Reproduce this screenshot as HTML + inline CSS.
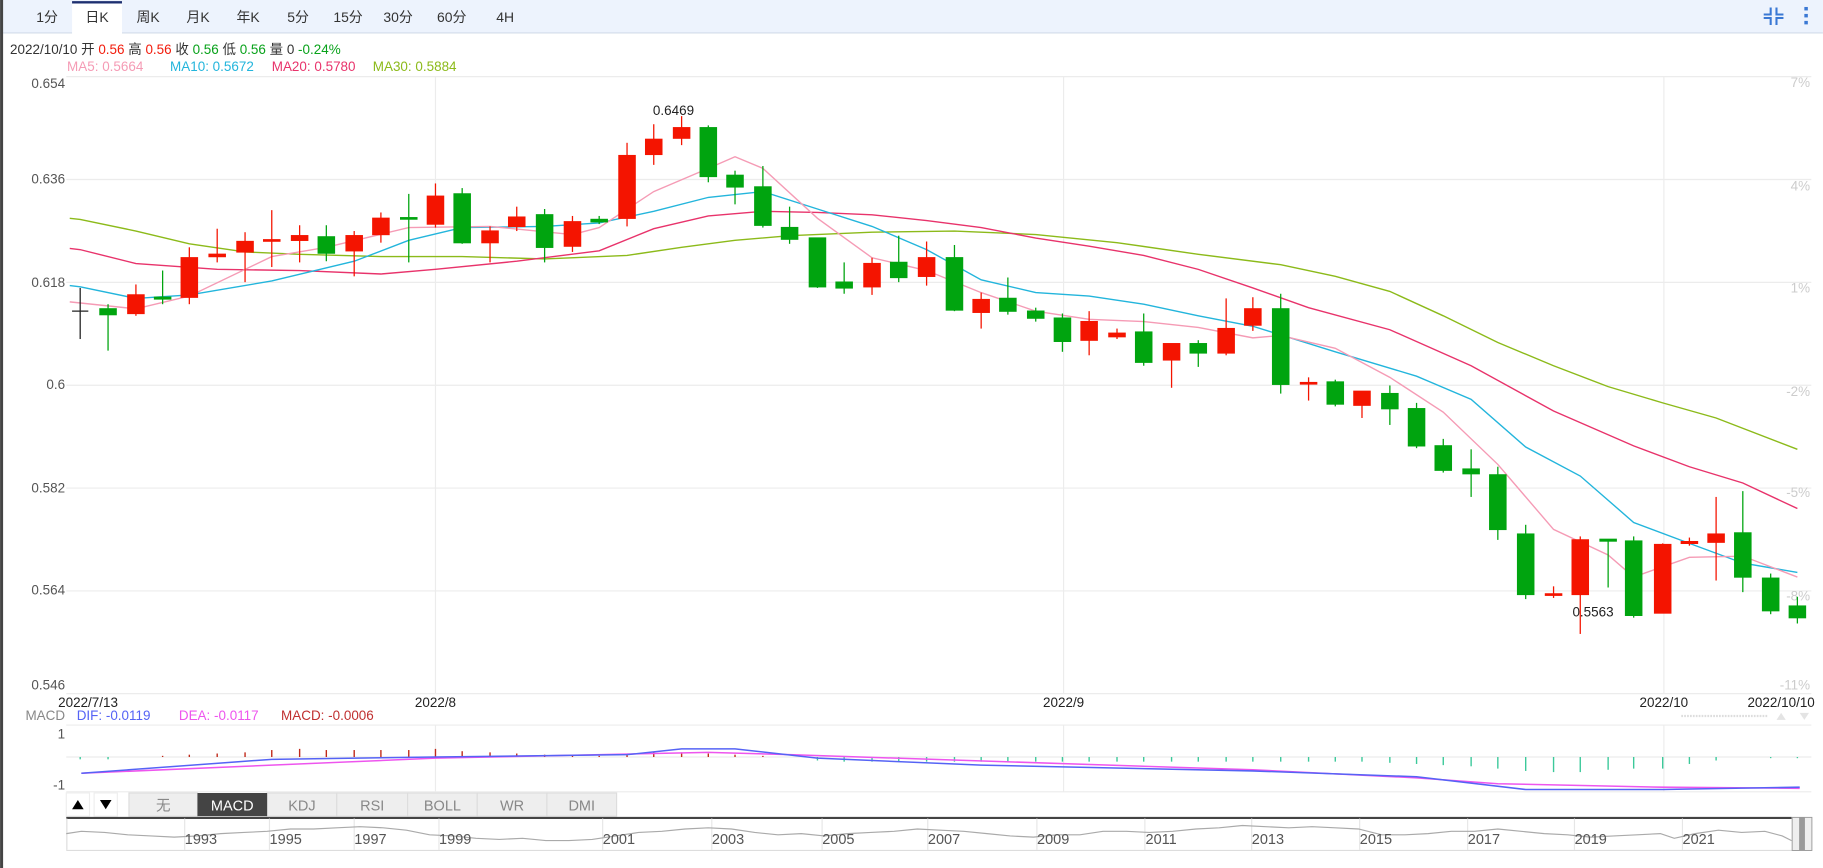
<!DOCTYPE html>
<html><head><meta charset="utf-8"><style>
html,body{margin:0;padding:0;background:#fff;width:1823px;height:868px;overflow:hidden}
svg{display:block}
text{font-family:"Liberation Sans","Noto Sans CJK SC",sans-serif}
.r{fill:#f41400;stroke:#f41400}
.g{fill:#00a40f;stroke:#00a40f}
.w{stroke-width:1.1}
</style></head><body>
<svg width="1823" height="868" viewBox="0 0 1570 747.6" xmlns="http://www.w3.org/2000/svg">
<rect x="0" y="0" width="1570" height="748" fill="#fff"/>
<rect x="0" y="0" width="1570" height="28.4" fill="#edf3fd"/>
<line x1="0" y1="28.4" x2="1570" y2="28.4" stroke="#d3dcea" stroke-width="1"/>
<rect x="62" y="1" width="43" height="28" fill="#fff"/>
<line x1="62" y1="2" x2="105" y2="2" stroke="#1d2f70" stroke-width="2"/>
<g font-size="12" fill="#333" text-anchor="middle">
<text x="40.5" y="19">1分</text><text x="83.5" y="19">日K</text><text x="127.5" y="19">周K</text>
<text x="170.5" y="19">月K</text><text x="213.6" y="19">年K</text><text x="256.7" y="19">5分</text>
<text x="299.7" y="19">15分</text><text x="342.8" y="19">30分</text><text x="389" y="19">60分</text><text x="435" y="19">4H</text>
</g>
<g stroke="#3a78d4" stroke-width="1.8" fill="none">
<path d="M1519 12.5h6v-6M1536 12.5h-6v-6M1519 15.5h6v6M1536 15.5h-6v6"/>
</g>
<g fill="#3a78d4"><rect x="1554" y="6" width="3" height="3"/><rect x="1554" y="12" width="3" height="3"/><rect x="1554" y="18" width="3" height="3"/></g>
<rect x="0" y="0" width="2.6" height="748" fill="#444"/>
<g font-size="11.6">
<text x="8.6" y="46.5" fill="#333">2022/10/10 开 <tspan fill="#f21b0b">0.56</tspan> 高 <tspan fill="#f21b0b">0.56</tspan> 收 <tspan fill="#08a21a">0.56</tspan> 低 <tspan fill="#08a21a">0.56</tspan> 量 0 <tspan fill="#08a21a">-0.24%</tspan></text>
<text x="57.7" y="61" fill="#f59bb5">MA5: 0.5664</text>
<text x="146.4" y="61" fill="#23b5dc">MA10: 0.5672</text>
<text x="234" y="61" fill="#e8336b">MA20: 0.5780</text>
<text x="321" y="61" fill="#8cba1a">MA30: 0.5884</text>
</g>
<g stroke="#ececec" stroke-width="1">
<line x1="57" y1="66" x2="1560" y2="66"/><line x1="57" y1="154.6" x2="1560" y2="154.6"/>
<line x1="57" y1="243.2" x2="1560" y2="243.2"/><line x1="57" y1="331.8" x2="1560" y2="331.8"/>
<line x1="57" y1="420.4" x2="1560" y2="420.4"/><line x1="57" y1="509" x2="1560" y2="509"/>
<line x1="57" y1="597.4" x2="1560" y2="597.4"/>
<line x1="375" y1="66" x2="375" y2="597"/><line x1="916" y1="66" x2="916" y2="597"/><line x1="1433" y1="66" x2="1433" y2="597"/>
<line x1="57" y1="624.5" x2="1560" y2="624.5"/><line x1="57" y1="652" x2="1560" y2="652"/><line x1="57" y1="682" x2="1560" y2="682"/>
<line x1="375" y1="624.5" x2="375" y2="682"/><line x1="916" y1="624.5" x2="916" y2="682"/><line x1="1433" y1="624.5" x2="1433" y2="682"/>
</g>
<g font-size="11.6" fill="#555" text-anchor="end">
<text x="56" y="76">0.654</text><text x="56" y="158">0.636</text><text x="56" y="247">0.618</text>
<text x="56" y="335">0.6</text><text x="56" y="424">0.582</text><text x="56" y="512">0.564</text><text x="56" y="594">0.546</text>
<text x="56" y="620" fill="#888">MACD</text><text x="56" y="636">1</text><text x="56" y="680">-1</text>
</g>
<g font-size="11.6" fill="#ccc" text-anchor="end">
<text x="1559" y="75">7%</text><text x="1559" y="164">4%</text><text x="1559" y="252">1%</text>
<text x="1559" y="341">-2%</text><text x="1559" y="428">-5%</text><text x="1559" y="517">-8%</text><text x="1559" y="594">-11%</text>
</g>
<g font-size="11.6" fill="#222">
<text x="50" y="609">2022/7/13</text><text x="375" y="609" text-anchor="middle">2022/8</text>
<text x="916" y="609" text-anchor="middle">2022/9</text><text x="1433" y="609" text-anchor="middle">2022/10</text>
<text x="1563" y="609" text-anchor="end">2022/10/10</text>
</g>
<line x1="1448" y1="616.7" x2="1523" y2="616.7" stroke="#ddd" stroke-width="2" stroke-dasharray="1.5 1"/>
<path d="M1530 620l4-6 4 6z M1550 614l4 6 4-6z" fill="#e4e4e4"/>
<g font-size="11.6"><text x="66" y="620" fill="#5563f5">DIF: -0.0119</text><text x="154" y="620" fill="#ee55ee">DEA: -0.0117</text><text x="242" y="620" fill="#c03030">MACD: -0.0006</text></g>
<g fill="none" stroke-width="1.2">
<polyline stroke="#8cba1a" points="60,188 69,189 117,199 163,210 211,217 258,219 328,221 398,221 469,223 540,220 587,213 633,207 680,203 751,200 822,199 892,202 962,209 1032,219 1103,228 1150,238 1197,251 1243,272 1290,295 1338,315 1385,333 1432,347 1478,360 1548,387"/>
<polyline stroke="#e8336b" points="60,214 69,215 117,227 187,232 258,233 328,236 375,232 445,225 516,216 563,197 610,186 657,182 704,183 751,185 798,190 845,196 892,205 938,212 985,220 1032,232 1079,248 1127,265 1197,284 1267,315 1338,354 1407,384 1455,402 1501,416 1548,438"/>
<polyline stroke="#23b5dc" points="60,246 69,247 117,257 163,254 234,242 305,225 352,207 398,196 469,195 516,192 563,182 610,170 657,165 704,180 751,195 798,215 845,241 892,252 938,255 985,262 1032,272 1079,281 1150,303 1220,324 1267,344 1314,385 1361,410 1407,450 1455,468 1501,485 1548,493"/>
<polyline stroke="#f59bb5" points="60,260 117,266 163,255 234,221 281,213 352,196 422,195 493,202 516,196 563,165 610,145 633,135 657,145 704,188 751,222 798,233 845,252 892,268 938,275 985,277 1032,282 1079,291 1103,289 1150,300 1197,325 1243,355 1290,400 1338,456 1385,478 1407,497 1455,480 1501,479 1548,497"/>
</g>
<g class="w">
<line x1="69" y1="248" x2="69" y2="292" stroke="#222"/><line x1="62" y1="268" x2="76" y2="268" stroke="#222"/>
<g class="g"><line x1="93" y1="262" x2="93" y2="302"/><rect x="86" y="266" width="14" height="5"/></g>
<g class="r"><line x1="117" y1="245" x2="117" y2="272"/><rect x="110" y="254" width="14" height="16"/></g>
<g class="g"><line x1="140" y1="233" x2="140" y2="262"/><rect x="133" y="256" width="14" height="1.5"/></g>
<g class="r"><line x1="163" y1="213" x2="163" y2="262"/><rect x="156" y="222" width="14" height="34"/></g>
<g class="r"><line x1="187" y1="197" x2="187" y2="226"/><rect x="180" y="219" width="14" height="2"/></g>
<g class="r"><line x1="211" y1="200" x2="211" y2="243"/><rect x="204" y="208" width="14" height="9"/></g>
<g class="r"><line x1="234" y1="181" x2="234" y2="230"/><rect x="227" y="206.5" width="14" height="1.2"/></g>
<g class="r"><line x1="258" y1="194" x2="258" y2="226"/><rect x="251" y="203" width="14" height="4"/></g>
<g class="g"><line x1="281" y1="194" x2="281" y2="225"/><rect x="274" y="204" width="14" height="14"/></g>
<g class="r"><line x1="305" y1="199" x2="305" y2="238"/><rect x="298" y="203" width="14" height="13"/></g>
<g class="r"><line x1="328" y1="183" x2="328" y2="209"/><rect x="321" y="188" width="14" height="14"/></g>
<g class="g"><line x1="352" y1="167" x2="352" y2="226"/><rect x="345" y="187.5" width="14" height="1.2"/></g>
<g class="r"><line x1="375" y1="158" x2="375" y2="196"/><rect x="368" y="169" width="14" height="24"/></g>
<g class="g"><line x1="398" y1="162" x2="398" y2="210"/><rect x="391" y="167" width="14" height="42"/></g>
<g class="r"><line x1="422" y1="195" x2="422" y2="226"/><rect x="415" y="199" width="14" height="10"/></g>
<g class="r"><line x1="445" y1="178" x2="445" y2="199"/><rect x="438" y="187" width="14" height="8"/></g>
<g class="g"><line x1="469" y1="180" x2="469" y2="226"/><rect x="462" y="185" width="14" height="28"/></g>
<g class="r"><line x1="493" y1="186" x2="493" y2="217"/><rect x="486" y="191" width="14" height="21"/></g>
<g class="g"><line x1="516" y1="186" x2="516" y2="193"/><rect x="509" y="189" width="14" height="2"/></g>
<g class="r"><line x1="540" y1="123" x2="540" y2="195"/><rect x="533" y="134" width="14" height="54"/></g>
<g class="r"><line x1="563" y1="107" x2="563" y2="142"/><rect x="556" y="120" width="14" height="13"/></g>
<g class="r"><line x1="587" y1="100" x2="587" y2="125"/><rect x="580" y="110" width="14" height="9"/></g>
<g class="g"><line x1="610" y1="108" x2="610" y2="157"/><rect x="603" y="110" width="14" height="42"/></g>
<g class="g"><line x1="633" y1="147" x2="633" y2="176"/><rect x="626" y="151" width="14" height="10"/></g>
<g class="g"><line x1="657" y1="143" x2="657" y2="196"/><rect x="650" y="161" width="14" height="33"/></g>
<g class="g"><line x1="680" y1="178" x2="680" y2="210"/><rect x="673" y="196" width="14" height="10"/></g>
<g class="g"><line x1="704" y1="205" x2="704" y2="248"/><rect x="697" y="205" width="14" height="42"/></g>
<g class="g"><line x1="727" y1="226" x2="727" y2="253"/><rect x="720" y="243" width="14" height="5"/></g>
<g class="r"><line x1="751" y1="222" x2="751" y2="254"/><rect x="744" y="227" width="14" height="20"/></g>
<g class="g"><line x1="774" y1="203" x2="774" y2="243"/><rect x="767" y="226" width="14" height="13"/></g>
<g class="r"><line x1="798" y1="208" x2="798" y2="246"/><rect x="791" y="222" width="14" height="16"/></g>
<g class="g"><line x1="822" y1="211" x2="822" y2="268"/><rect x="815" y="222" width="14" height="45"/></g>
<g class="r"><line x1="845" y1="252" x2="845" y2="283"/><rect x="838" y="258" width="14" height="11"/></g>
<g class="g"><line x1="868" y1="239" x2="868" y2="271"/><rect x="861" y="257" width="14" height="11"/></g>
<g class="g"><line x1="892" y1="265" x2="892" y2="277"/><rect x="885" y="268" width="14" height="6"/></g>
<g class="g"><line x1="915" y1="270" x2="915" y2="303"/><rect x="908" y="274" width="14" height="20"/></g>
<g class="r"><line x1="938" y1="268" x2="938" y2="306"/><rect x="931" y="277" width="14" height="16"/></g>
<g class="r"><line x1="962" y1="283" x2="962" y2="292"/><rect x="955" y="287" width="14" height="3"/></g>
<g class="g"><line x1="985" y1="270" x2="985" y2="315"/><rect x="978" y="286" width="14" height="26"/></g>
<g class="r"><line x1="1009" y1="296" x2="1009" y2="334"/><rect x="1002" y="296" width="14" height="14"/></g>
<g class="g"><line x1="1032" y1="293" x2="1032" y2="316"/><rect x="1025" y="296" width="14" height="8"/></g>
<g class="r"><line x1="1056" y1="257" x2="1056" y2="306"/><rect x="1049" y="283" width="14" height="21"/></g>
<g class="r"><line x1="1079" y1="256" x2="1079" y2="285"/><rect x="1072" y="266" width="14" height="14"/></g>
<g class="g"><line x1="1103" y1="253" x2="1103" y2="339"/><rect x="1096" y="266" width="14" height="65"/></g>
<g class="r"><line x1="1127" y1="325" x2="1127" y2="345"/><rect x="1120" y="329.5" width="14" height="1.2"/></g>
<g class="g"><line x1="1150" y1="327" x2="1150" y2="350"/><rect x="1143" y="329" width="14" height="19"/></g>
<g class="r"><line x1="1173" y1="337" x2="1173" y2="360"/><rect x="1166" y="337" width="14" height="12"/></g>
<g class="g"><line x1="1197" y1="332" x2="1197" y2="366"/><rect x="1190" y="339" width="14" height="13"/></g>
<g class="g"><line x1="1220" y1="347" x2="1220" y2="386"/><rect x="1213" y="352" width="14" height="32"/></g>
<g class="g"><line x1="1243" y1="378" x2="1243" y2="407"/><rect x="1236" y="384" width="14" height="21"/></g>
<g class="g"><line x1="1267" y1="387" x2="1267" y2="428"/><rect x="1260" y="404" width="14" height="4"/></g>
<g class="g"><line x1="1290" y1="402" x2="1290" y2="465"/><rect x="1283" y="409" width="14" height="47"/></g>
<g class="g"><line x1="1314" y1="452" x2="1314" y2="516"/><rect x="1307" y="460" width="14" height="52"/></g>
<g class="r"><line x1="1338" y1="505" x2="1338" y2="515"/><rect x="1331" y="511.5" width="14" height="1.2"/></g>
<g class="r"><line x1="1361" y1="462" x2="1361" y2="546"/><rect x="1354" y="465" width="14" height="47"/></g>
<g class="g"><line x1="1385" y1="465" x2="1385" y2="506"/><rect x="1378" y="464.5" width="14" height="1.5"/></g>
<g class="g"><line x1="1407" y1="462" x2="1407" y2="532"/><rect x="1400" y="466" width="14" height="64"/></g>
<g class="r"><line x1="1432" y1="468" x2="1432" y2="528"/><rect x="1425" y="469" width="14" height="59"/></g>
<g class="r"><line x1="1455" y1="463" x2="1455" y2="470"/><rect x="1448" y="466.5" width="14" height="1.5"/></g>
<g class="r"><line x1="1478" y1="428" x2="1478" y2="500"/><rect x="1471" y="460" width="14" height="7"/></g>
<g class="g"><line x1="1501" y1="423" x2="1501" y2="510"/><rect x="1494" y="459" width="14" height="38"/></g>
<g class="g"><line x1="1525" y1="494" x2="1525" y2="529"/><rect x="1518" y="498" width="14" height="28"/></g>
<g class="g"><line x1="1548" y1="514" x2="1548" y2="537"/><rect x="1541" y="522" width="14" height="10"/></g>
</g>
<g font-size="11.6" fill="#222"><text x="580" y="99" text-anchor="middle">0.6469</text><text x="1372" y="531" text-anchor="middle">0.5563</text></g>
<g stroke="#c02a1a" stroke-width="1.2">
<line x1="140" y1="652" x2="140" y2="651"/><line x1="163" y1="652" x2="163" y2="650"/><line x1="187" y1="652" x2="187" y2="649"/>
<line x1="211" y1="652" x2="211" y2="648"/><line x1="234" y1="652" x2="234" y2="646"/><line x1="258" y1="652" x2="258" y2="645"/>
<line x1="281" y1="652" x2="281" y2="646"/><line x1="305" y1="652" x2="305" y2="646"/><line x1="328" y1="652" x2="328" y2="646"/>
<line x1="352" y1="652" x2="352" y2="646"/><line x1="375" y1="652" x2="375" y2="645"/><line x1="398" y1="652" x2="398" y2="647"/>
<line x1="422" y1="652" x2="422" y2="648"/><line x1="445" y1="652" x2="445" y2="649"/><line x1="469" y1="652" x2="469" y2="650"/>
<line x1="493" y1="652" x2="493" y2="650"/><line x1="516" y1="652" x2="516" y2="651"/><line x1="540" y1="652" x2="540" y2="649"/>
<line x1="563" y1="652" x2="563" y2="648"/><line x1="587" y1="652" x2="587" y2="648"/><line x1="610" y1="652" x2="610" y2="649"/>
<line x1="633" y1="652" x2="633" y2="650"/><line x1="657" y1="652" x2="657" y2="651"/>
</g>
<g stroke="#3cc99a" stroke-width="1.2">
<line x1="69" y1="652" x2="69" y2="654"/><line x1="93" y1="652" x2="93" y2="654"/>
<line x1="704" y1="652" x2="704" y2="655"/><line x1="727" y1="652" x2="727" y2="656"/><line x1="751" y1="652" x2="751" y2="656"/>
<line x1="774" y1="652" x2="774" y2="656"/><line x1="798" y1="652" x2="798" y2="656"/><line x1="822" y1="652" x2="822" y2="656"/>
<line x1="845" y1="652" x2="845" y2="656"/><line x1="868" y1="652" x2="868" y2="656"/><line x1="892" y1="652" x2="892" y2="656"/>
<line x1="915" y1="652" x2="915" y2="656"/><line x1="938" y1="652" x2="938" y2="656"/><line x1="962" y1="652" x2="962" y2="656"/>
<line x1="985" y1="652" x2="985" y2="656"/><line x1="1009" y1="652" x2="1009" y2="656"/><line x1="1032" y1="652" x2="1032" y2="656"/>
<line x1="1056" y1="652" x2="1056" y2="656"/><line x1="1079" y1="652" x2="1079" y2="656"/><line x1="1103" y1="652" x2="1103" y2="656"/>
<line x1="1127" y1="652" x2="1127" y2="656"/><line x1="1150" y1="652" x2="1150" y2="656"/><line x1="1173" y1="652" x2="1173" y2="656"/>
<line x1="1197" y1="652" x2="1197" y2="657"/><line x1="1220" y1="652" x2="1220" y2="658"/><line x1="1243" y1="652" x2="1243" y2="659"/>
<line x1="1267" y1="652" x2="1267" y2="660"/><line x1="1290" y1="652" x2="1290" y2="662"/><line x1="1314" y1="652" x2="1314" y2="664"/>
<line x1="1338" y1="652" x2="1338" y2="665"/><line x1="1361" y1="652" x2="1361" y2="665"/><line x1="1385" y1="652" x2="1385" y2="663"/>
<line x1="1407" y1="652" x2="1407" y2="662"/><line x1="1432" y1="652" x2="1432" y2="662"/><line x1="1455" y1="652" x2="1455" y2="658"/>
<line x1="1478" y1="652" x2="1478" y2="655"/><line x1="1525" y1="652" x2="1525" y2="653"/><line x1="1548" y1="652" x2="1548" y2="653"/>
</g>
<g fill="none" stroke-width="1.3">
<polyline stroke="#ee55ee" points="70,666 375,653 610,648 680,650 1079,663 1220,670 1290,675 1432,678 1550,679"/>
<polyline stroke="#5563f5" points="70,666 234,654 375,652 540,650 587,645 633,645 704,653 845,659 1079,664 1220,669 1314,680 1432,680 1550,678"/>
</g>
<rect x="57" y="683" width="20" height="20" fill="#fff" stroke="#eee"/>
<rect x="81" y="683" width="20" height="20" fill="#fff" stroke="#eee"/>
<path d="M62 697l5-8 5 8z M86 689l5 8 5-8z" fill="#000"/>
<g stroke="#ddd" fill="#eee">
<rect x="111" y="683" width="59" height="20"/><rect x="230" y="683" width="60" height="20"/><rect x="290" y="683" width="61" height="20"/>
<rect x="351" y="683" width="60" height="20"/><rect x="411" y="683" width="60" height="20"/><rect x="471" y="683" width="60" height="20"/>
</g>
<rect x="170" y="683" width="60" height="20" fill="#444"/>
<g font-size="12.5" fill="#888" text-anchor="middle">
<text x="140.5" y="698">无</text><text x="200" y="698" fill="#fff">MACD</text><text x="260" y="698">KDJ</text>
<text x="320.5" y="698">RSI</text><text x="381" y="698">BOLL</text><text x="441" y="698">WR</text><text x="501" y="698">DMI</text>
</g>
<line x1="57" y1="704.5" x2="1543" y2="704.5" stroke="#444" stroke-width="1.8"/>
<line x1="57" y1="732.5" x2="1560" y2="732.5" stroke="#ddd" stroke-width="1"/>
<line x1="57.5" y1="705" x2="57.5" y2="732" stroke="#ddd"/>
<g stroke="#e6e6e6">
<line x1="159" y1="705" x2="159" y2="732"/><line x1="232" y1="705" x2="232" y2="732"/><line x1="305" y1="705" x2="305" y2="732"/>
<line x1="378" y1="705" x2="378" y2="732"/><line x1="519" y1="705" x2="519" y2="732"/><line x1="613" y1="705" x2="613" y2="732"/>
<line x1="708" y1="705" x2="708" y2="732"/><line x1="799" y1="705" x2="799" y2="732"/><line x1="893" y1="705" x2="893" y2="732"/>
<line x1="986" y1="705" x2="986" y2="732"/><line x1="1078" y1="705" x2="1078" y2="732"/><line x1="1171" y1="705" x2="1171" y2="732"/>
<line x1="1264" y1="705" x2="1264" y2="732"/><line x1="1356" y1="705" x2="1356" y2="732"/><line x1="1449" y1="705" x2="1449" y2="732"/>
</g>
<polyline fill="none" stroke="#aaa" stroke-width="1" points="57,718 70,716 90,717 110,719 130,720 150,721 170,720 190,718 210,717 230,716 250,714 270,714 290,713 310,712 330,713 350,715 370,719 390,720 410,722 430,723 450,722 470,724 490,724 510,723 530,720 550,717 570,716 590,714 610,713 630,714 650,717 670,719 690,718 710,720 730,718 750,717 770,716 790,714 810,715 830,716 850,718 870,720 890,721 910,719 930,719 950,716 970,716 990,717 1010,716 1030,714 1050,713 1070,711 1090,712 1110,713 1130,712 1150,713 1170,714 1190,719 1210,719 1230,718 1250,716 1270,716 1290,714 1310,716 1330,718 1350,719 1370,721 1390,720 1410,719 1430,718 1442,722 1460,718 1480,715 1500,717 1520,716 1535,720 1543,724"/>
<g font-size="12.5" fill="#555" text-anchor="middle">
<text x="173" y="727">1993</text><text x="246" y="727">1995</text><text x="319" y="727">1997</text><text x="392" y="727">1999</text>
<text x="533" y="727">2001</text><text x="627" y="727">2003</text><text x="722" y="727">2005</text><text x="813" y="727">2007</text>
<text x="907" y="727">2009</text><text x="1000" y="727">2011</text><text x="1092" y="727">2013</text><text x="1185" y="727">2015</text>
<text x="1278" y="727">2017</text><text x="1370" y="727">2019</text><text x="1463" y="727">2021</text>
</g>
<rect x="1543.5" y="704" width="17" height="28.5" fill="#eee" stroke="#999" stroke-width="0.8"/>
<rect x="1549.5" y="704" width="5" height="28.5" fill="#999"/>
</svg>
</body></html>
